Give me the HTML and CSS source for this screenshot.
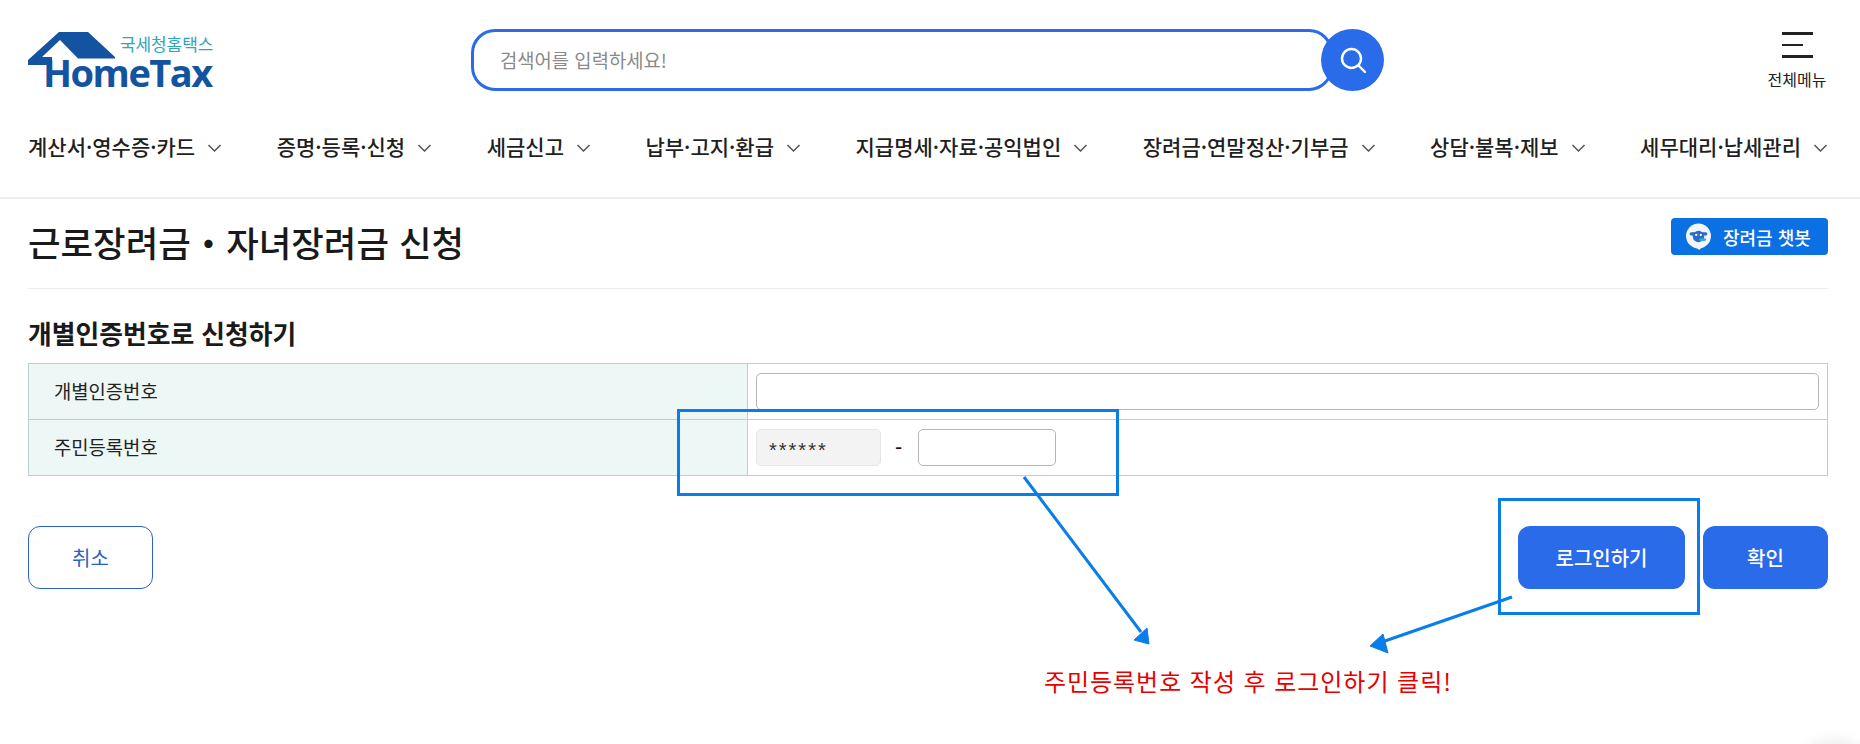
FILE: index.html
```html
<!DOCTYPE html>
<html lang="ko">
<head>
<meta charset="utf-8">
<title>근로장려금 신청</title>
<link rel="stylesheet" href="styles.css">
</head>
<body>
<header class="site-header">
  <div class="top">
    <a class="logo">
      <svg class="logo-roof" width="90" height="34" viewBox="0 0 90 34"><path d="M0 28L31 0H60L87 25V26.500H50L32 8 14 25H24V33H0Z" fill="#14539f"/></svg>
      <span class="logo-sub">국세청홈택스</span>
      <span class="logo-main">HomeTax</span>
    </a>
    <form class="search">
      <input class="search-input" type="text" placeholder="검색어를 입력하세요!">
      <button class="search-btn" type="button" aria-label="검색">
        <svg width="30" height="30" viewBox="0 0 30 30" fill="none" stroke="#fff" stroke-width="2.4"><circle cx="13.5" cy="13.5" r="9.5"/><path d="M20.5 20.5L27 27" stroke-linecap="round"/></svg>
      </button>
    </form>
    <button class="all-menu" type="button">
      <span class="burger"><i class="b-line"></i><i class="b-line b-short"></i><i class="b-line"></i></span>
      <span class="all-label">전체메뉴</span>
    </button>
  </div>
  <nav class="gnb">
    <a class="gnb-item">계산서·영수증·카드<svg class="chev" viewBox="0 0 14 8"><path d="M1 1l6 6 6-6"/></svg></a>
    <a class="gnb-item">증명·등록·신청<svg class="chev" viewBox="0 0 14 8"><path d="M1 1l6 6 6-6"/></svg></a>
    <a class="gnb-item">세금신고<svg class="chev" viewBox="0 0 14 8"><path d="M1 1l6 6 6-6"/></svg></a>
    <a class="gnb-item">납부·고지·환급<svg class="chev" viewBox="0 0 14 8"><path d="M1 1l6 6 6-6"/></svg></a>
    <a class="gnb-item">지급명세·자료·공익법인<svg class="chev" viewBox="0 0 14 8"><path d="M1 1l6 6 6-6"/></svg></a>
    <a class="gnb-item">장려금·연말정산·기부금<svg class="chev" viewBox="0 0 14 8"><path d="M1 1l6 6 6-6"/></svg></a>
    <a class="gnb-item">상담·불복·제보<svg class="chev" viewBox="0 0 14 8"><path d="M1 1l6 6 6-6"/></svg></a>
    <a class="gnb-item">세무대리·납세관리<svg class="chev" viewBox="0 0 14 8"><path d="M1 1l6 6 6-6"/></svg></a>
  </nav>
</header>
<main class="content">
  <div class="title-row">
    <h1 class="page-title">근로장려금・자녀장려금 신청</h1>
    <button class="chatbot" type="button">
      <svg width="27" height="27" viewBox="0 0 26 26"><circle cx="13" cy="12.500" r="12" fill="#f2f5fb"/><path d="M11 24l3 2 2-3z" fill="#f2f5fb"/><circle cx="13" cy="13" r="5.500" fill="#2a6bc9"/><path d="M6 10.500h14" stroke="#2a6bc9" stroke-width="3" stroke-linecap="round"/><path d="M15 16h4" stroke="#3fa7c9" stroke-width="2.500" stroke-linecap="round"/><circle cx="10.800" cy="11.500" r="1.100" fill="#fff"/><circle cx="15.200" cy="11.500" r="1.100" fill="#fff"/></svg>
      <span>장려금 챗봇</span>
    </button>
  </div>
  <h2 class="sub-title">개별인증번호로 신청하기</h2>
  <table class="form-table">
    <colgroup><col class="col-label"><col></colgroup>
    <tr>
      <th>개별인증번호</th>
      <td><input class="field field-full" type="text"></td>
    </tr>
    <tr>
      <th>주민등록번호</th>
      <td>
        <div class="rrn">
          <input class="field field-ro" type="text" value="******" readonly>
          <span class="dash">-</span>
          <input class="field field-back" type="text">
        </div>
      </td>
    </tr>
  </table>
  <div class="actions">
    <button class="btn btn-line" type="button">취소</button>
    <div class="actions-right">
      <button class="btn btn-solid btn-login" type="button">로그인하기</button>
      <button class="btn btn-solid" type="button">확인</button>
    </div>
  </div>
</main>
<div class="note-box note-rrn"></div>
<div class="note-box note-login"></div>
<svg class="note-arrows" width="1860" height="744" viewBox="0 0 1860 744">
  <path d="M1024 477L1141 632M1512 597L1382 642" stroke="#0a7ee8" stroke-width="3" fill="none"/>
  <path d="M1149 644L1134 640 1147 628ZM1370 646L1383 634 1388 653Z" fill="#0a7ee8" stroke="#0a7ee8" stroke-width="1"/>
</svg>
<p class="note-text">주민등록번호 작성 후 로그인하기 클릭!</p>
<div class="corner-glow"></div>
</body>
</html>
```
FILE: styles.css
```css
* { box-sizing: border-box; }
html, body { margin: 0; padding: 0; }
body {
  position: relative;
  width: 1860px;
  height: 744px;
  overflow: hidden;
  background: #fff;
  color: #1a1a1a;
  font-family: "Noto Sans CJK KR", "Noto Sans", sans-serif;
}
button, input { font-family: inherit; }

.site-header { border-bottom: 2px solid #eeeeee; height: 199px; }
.top {
  display: flex;
  align-items: flex-start;
  height: 112px;
  padding: 0 32px 0 28px;
}
.logo {
  position: relative;
  display: block;
  flex: 0 0 186px;
  height: 90px;
}
.logo-roof { position: absolute; left: 0; top: 32px; }
.logo-sub {
  position: absolute;
  left: 92px;
  top: 35px;
  font-size: 17px;
  line-height: 18px;
  color: #2fa5b8;
  letter-spacing: -0.1px;
  white-space: nowrap;
}
.logo-main {
  position: absolute;
  left: 15px;
  top: 57px;
  font-family: "Open Sans", sans-serif;
  font-weight: 700;
  font-size: 38px;
  line-height: 30px;
  color: #14539f;
  letter-spacing: -1.500px;
  white-space: nowrap;
}
.search {
  display: flex;
  align-items: center;
  margin: 29px 0 0 257px;
}
.search-input {
  width: 862px;
  height: 62px;
  border: 3px solid #2a6bea;
  border-radius: 24px;
  padding: 0 26px 2px;
  font-size: 18.800px;
  outline: none;
}
.search-input::placeholder { color: #8a8a8a; }
.search-btn {
  width: 63px;
  height: 62px;
  margin-left: -12px;
  border: 0;
  border-radius: 50%;
  background: #2a6bea;
  padding: 0;
  display: flex;
  align-items: center;
  justify-content: center;
}
.all-menu {
  margin-left: auto;
  margin-top: 32px;
  width: 62px;
  padding: 0;
  border: 0;
  background: none;
  display: flex;
  flex-direction: column;
  align-items: center;
}
.burger { display: flex; flex-direction: column; gap: 9px; width: 31px; }
.b-line { display: block; height: 3px; background: #222; }
.b-short { width: 21px; height: 2px; }
.all-label { font-size: 16px; line-height: 20px; color: #222; margin-top: 11px; white-space: nowrap; }

.gnb {
  display: flex;
  justify-content: space-between;
  align-items: center;
  height: 70px;
  padding: 0 32px 2px 28px;
}
.gnb-item {
  display: flex;
  align-items: center;
  font-size: 21px;
  font-weight: 500;
  color: #1f1f1f;
  white-space: nowrap;
}
.chev { width: 15px; height: 8px; margin-left: 12px; margin-top: 3px; fill: none; stroke: #555; stroke-width: 1.5; }

.content { padding: 0 32px 0 28px; }
.title-row {
  display: flex;
  justify-content: space-between;
  align-items: flex-start;
  height: 90px;
  border-bottom: 1px solid #ececec;
}
.page-title {
  margin: 18px 0 0;
  font-size: 35.400px;
  line-height: 50px;
  font-weight: 500;
  color: #1a1a1a;
}
.chatbot {
  display: flex;
  align-items: center;
  gap: 11px;
  margin-top: 19px;
  width: 157px;
  height: 37px;
  padding: 0 0 0 14px;
  border: 0;
  border-radius: 4px;
  background: #0a70e4;
  color: #fff;
  font-size: 18px;
  font-weight: 500;
  white-space: nowrap;
}
.sub-title {
  margin: 27px 0 13px;
  font-size: 25.800px;
  line-height: 34px;
  font-weight: 600;
  color: #1a1a1a;
}
.form-table {
  width: 100%;
  border-collapse: collapse;
  table-layout: fixed;
  border: 1px solid #bacfd1;
}
.col-label { width: 719px; }
.form-table th, .form-table td { height: 56px; border: 1px solid #bacfd1; padding: 0; }
.form-table th {
  background: #edf7f6;
  padding: 0 0 2px 25px;
  text-align: left;
  font-size: 18.800px;
  font-weight: 400;
  color: #222;
}
.form-table td { padding: 0 8px; }
.field {
  display: block;
  height: 37px;
  border: 1px solid #b5b5b5;
  border-radius: 5px;
  background: #fff;
  outline: none;
}
.field-full { width: 100%; }
.rrn { display: flex; align-items: center; }
.field-ro {
  width: 125px;
  background: #f3f3f3;
  border-color: #e6e6e6;
  padding: 5px 12px 0;
  font-family: "Liberation Sans", sans-serif;
  font-size: 20px;
  letter-spacing: 2px;
  color: #333;
}
.dash { width: 35px; margin-right: 2px; text-align: center; font-size: 20px; font-weight: 500; color: #111; }
.field-back { width: 138px; }

.actions {
  display: flex;
  justify-content: space-between;
  margin-top: 50px;
}
.actions-right { display: flex; gap: 18px; }
.btn {
  width: 125px;
  height: 63px;
  border-radius: 12px;
  font-size: 20px;
  font-weight: 500;
  padding: 0;
}
.btn-line { border: 1px solid #2a62c4; background: #fff; color: #2a62c4; font-weight: 400; }
.btn-solid { border: 0; background: #2a6bea; color: #fff; }
.btn-login { width: 167px; }

.note-box { position: absolute; border: 3px solid #0a7ee8; }
.note-rrn { left: 677px; top: 409px; width: 442px; height: 87px; }
.note-login { left: 1498px; top: 498px; width: 202px; height: 117px; }
.note-arrows { position: absolute; left: 0; top: 0; pointer-events: none; }
.note-text {
  position: absolute;
  left: 1044px;
  top: 664px;
  margin: 0;
  font-size: 24px;
  line-height: 34px;
  font-weight: 400;
  letter-spacing: 0.950px;
  color: #e60000;
  white-space: nowrap;
}
.corner-glow {
  position: absolute;
  left: 1805px;
  top: 738px;
  width: 60px;
  height: 30px;
  border-radius: 50%;
  background: #f1f1f1;
  filter: blur(5px);
}
```
